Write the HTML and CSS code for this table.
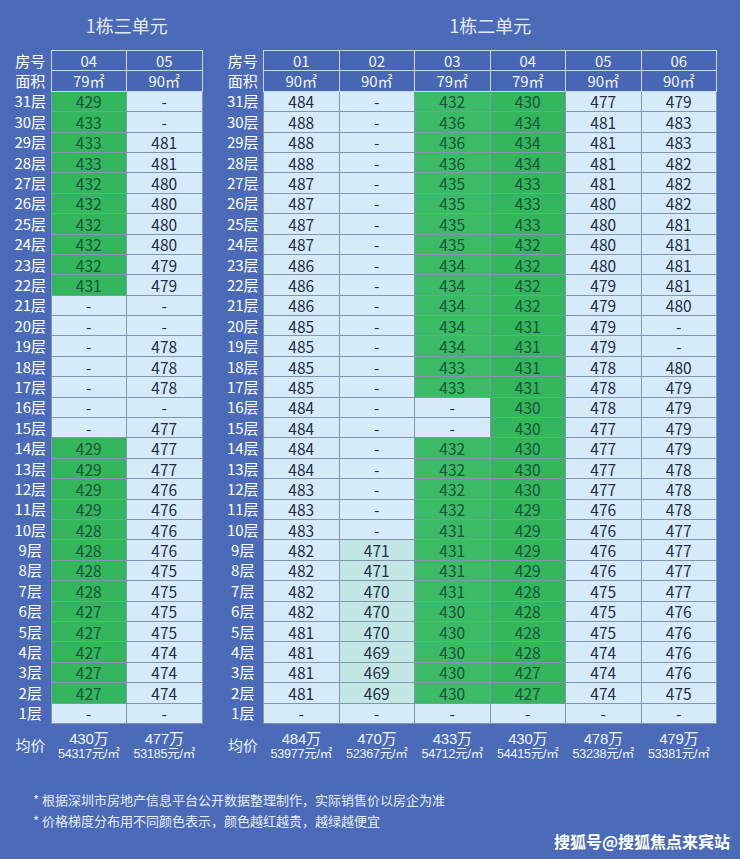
FILE: index.html
```html
<!DOCTYPE html>
<html lang="zh-CN">
<head>
<meta charset="utf-8">
<title>1栋 价格表</title>
<link rel="stylesheet" href="styles.css">
</head>
<body>
<main class="page">
  <div class="blocks">
    <section class="block">
      <h2 class="title">1栋三单元</h2>
      <table class="sheet sheet-2">
        <colgroup><col class="c-label"><col class="c-data"><col class="c-data"></colgroup>
        <thead>
          <tr><th class="lab">房号</th><td>04</td><td>05</td></tr>
          <tr><th class="lab">面积</th><td>79㎡</td><td>90㎡</td></tr>
        </thead>
        <tbody>
          <tr><th class="lab">31层</th><td class="g">429</td><td>-</td></tr>
          <tr><th class="lab">30层</th><td class="g">433</td><td>-</td></tr>
          <tr><th class="lab">29层</th><td class="g">433</td><td>481</td></tr>
          <tr><th class="lab">28层</th><td class="g">433</td><td>481</td></tr>
          <tr><th class="lab">27层</th><td class="g">432</td><td>480</td></tr>
          <tr><th class="lab">26层</th><td class="g">432</td><td>480</td></tr>
          <tr><th class="lab">25层</th><td class="g">432</td><td>480</td></tr>
          <tr><th class="lab">24层</th><td class="g">432</td><td>480</td></tr>
          <tr><th class="lab">23层</th><td class="g">432</td><td>479</td></tr>
          <tr><th class="lab">22层</th><td class="g">431</td><td>479</td></tr>
          <tr><th class="lab">21层</th><td>-</td><td>-</td></tr>
          <tr><th class="lab">20层</th><td>-</td><td>-</td></tr>
          <tr><th class="lab">19层</th><td>-</td><td>478</td></tr>
          <tr><th class="lab">18层</th><td>-</td><td>478</td></tr>
          <tr><th class="lab">17层</th><td>-</td><td>478</td></tr>
          <tr><th class="lab">16层</th><td>-</td><td>-</td></tr>
          <tr><th class="lab">15层</th><td>-</td><td>477</td></tr>
          <tr><th class="lab">14层</th><td class="g">429</td><td>477</td></tr>
          <tr><th class="lab">13层</th><td class="g">429</td><td>477</td></tr>
          <tr><th class="lab">12层</th><td class="g">429</td><td>476</td></tr>
          <tr><th class="lab">11层</th><td class="g">429</td><td>476</td></tr>
          <tr><th class="lab">10层</th><td class="g">428</td><td>476</td></tr>
          <tr><th class="lab">9层</th><td class="g">428</td><td>476</td></tr>
          <tr><th class="lab">8层</th><td class="g">428</td><td>475</td></tr>
          <tr><th class="lab">7层</th><td class="g">428</td><td>475</td></tr>
          <tr><th class="lab">6层</th><td class="g">427</td><td>475</td></tr>
          <tr><th class="lab">5层</th><td class="g">427</td><td>475</td></tr>
          <tr><th class="lab">4层</th><td class="g">427</td><td>474</td></tr>
          <tr><th class="lab">3层</th><td class="g">427</td><td>474</td></tr>
          <tr><th class="lab">2层</th><td class="g">427</td><td>474</td></tr>
          <tr><th class="lab">1层</th><td>-</td><td>-</td></tr>
        </tbody>
        <tfoot>
          <tr>
            <th class="avg-lab">均价</th>
            <td class="avg"><span class="avg-total">430万</span><span class="avg-unit">54317元/㎡</span></td>
            <td class="avg"><span class="avg-total">477万</span><span class="avg-unit">53185元/㎡</span></td>
          </tr>
        </tfoot>
      </table>
    </section>

    <section class="block">
      <h2 class="title">1栋二单元</h2>
      <table class="sheet sheet-6">
        <colgroup><col class="c-label"><col class="c-data"><col class="c-data"><col class="c-data"><col class="c-data"><col class="c-data"><col class="c-data"></colgroup>
        <thead>
          <tr><th class="lab">房号</th><td>01</td><td>02</td><td>03</td><td>04</td><td>05</td><td>06</td></tr>
          <tr><th class="lab">面积</th><td>90㎡</td><td>90㎡</td><td>79㎡</td><td>79㎡</td><td>90㎡</td><td>90㎡</td></tr>
        </thead>
        <tbody>
          <tr><th class="lab">31层</th><td>484</td><td>-</td><td class="g g3">432</td><td class="g">430</td><td>477</td><td>479</td></tr>
          <tr><th class="lab">30层</th><td>488</td><td>-</td><td class="g g3">436</td><td class="g">434</td><td>481</td><td>483</td></tr>
          <tr><th class="lab">29层</th><td>488</td><td>-</td><td class="g g3">436</td><td class="g">434</td><td>481</td><td>483</td></tr>
          <tr><th class="lab">28层</th><td>488</td><td>-</td><td class="g g3">436</td><td class="g">434</td><td>481</td><td>482</td></tr>
          <tr><th class="lab">27层</th><td>487</td><td>-</td><td class="g g3">435</td><td class="g">433</td><td>481</td><td>482</td></tr>
          <tr><th class="lab">26层</th><td>487</td><td>-</td><td class="g g3">435</td><td class="g">433</td><td>480</td><td>482</td></tr>
          <tr><th class="lab">25层</th><td>487</td><td>-</td><td class="g g3">435</td><td class="g">433</td><td>480</td><td>481</td></tr>
          <tr><th class="lab">24层</th><td>487</td><td>-</td><td class="g g3">435</td><td class="g">432</td><td>480</td><td>481</td></tr>
          <tr><th class="lab">23层</th><td>486</td><td>-</td><td class="g g3">434</td><td class="g">432</td><td>480</td><td>481</td></tr>
          <tr><th class="lab">22层</th><td>486</td><td>-</td><td class="g g3">434</td><td class="g">432</td><td>479</td><td>481</td></tr>
          <tr><th class="lab">21层</th><td>486</td><td>-</td><td class="g g3">434</td><td class="g">432</td><td>479</td><td>480</td></tr>
          <tr><th class="lab">20层</th><td>485</td><td>-</td><td class="g g3">434</td><td class="g">431</td><td>479</td><td>-</td></tr>
          <tr><th class="lab">19层</th><td>485</td><td>-</td><td class="g g3">434</td><td class="g">431</td><td>479</td><td>-</td></tr>
          <tr><th class="lab">18层</th><td>485</td><td>-</td><td class="g g3">433</td><td class="g">431</td><td>478</td><td>480</td></tr>
          <tr><th class="lab">17层</th><td>485</td><td>-</td><td class="g g3">433</td><td class="g">431</td><td>478</td><td>479</td></tr>
          <tr><th class="lab">16层</th><td>484</td><td>-</td><td>-</td><td class="g">430</td><td>478</td><td>479</td></tr>
          <tr><th class="lab">15层</th><td>484</td><td>-</td><td>-</td><td class="g">430</td><td>477</td><td>479</td></tr>
          <tr><th class="lab">14层</th><td>484</td><td>-</td><td class="g g3">432</td><td class="g">430</td><td>477</td><td>479</td></tr>
          <tr><th class="lab">13层</th><td>484</td><td>-</td><td class="g g3">432</td><td class="g">430</td><td>477</td><td>478</td></tr>
          <tr><th class="lab">12层</th><td>483</td><td>-</td><td class="g g3">432</td><td class="g">430</td><td>477</td><td>478</td></tr>
          <tr><th class="lab">11层</th><td>483</td><td>-</td><td class="g g3">432</td><td class="g">429</td><td>476</td><td>478</td></tr>
          <tr><th class="lab">10层</th><td>483</td><td>-</td><td class="g g3">431</td><td class="g">429</td><td>476</td><td>477</td></tr>
          <tr><th class="lab">9层</th><td>482</td><td class="t">471</td><td class="g g3">431</td><td class="g">429</td><td>476</td><td>477</td></tr>
          <tr><th class="lab">8层</th><td>482</td><td class="t">471</td><td class="g g3">431</td><td class="g">429</td><td>476</td><td>477</td></tr>
          <tr><th class="lab">7层</th><td>482</td><td class="t">470</td><td class="g g3">431</td><td class="g">428</td><td>475</td><td>477</td></tr>
          <tr><th class="lab">6层</th><td>482</td><td class="t">470</td><td class="g g3">430</td><td class="g">428</td><td>475</td><td>476</td></tr>
          <tr><th class="lab">5层</th><td>481</td><td class="t">470</td><td class="g g3">430</td><td class="g">428</td><td>475</td><td>476</td></tr>
          <tr><th class="lab">4层</th><td>481</td><td class="t">469</td><td class="g g3">430</td><td class="g">428</td><td>474</td><td>476</td></tr>
          <tr><th class="lab">3层</th><td>481</td><td class="t">469</td><td class="g g3">430</td><td class="g">427</td><td>474</td><td>476</td></tr>
          <tr><th class="lab">2层</th><td>481</td><td class="t">469</td><td class="g g3">430</td><td class="g">427</td><td>474</td><td>475</td></tr>
          <tr><th class="lab">1层</th><td>-</td><td>-</td><td>-</td><td>-</td><td>-</td><td>-</td></tr>
        </tbody>
        <tfoot>
          <tr>
            <th class="avg-lab">均价</th>
            <td class="avg"><span class="avg-total">484万</span><span class="avg-unit">53977元/㎡</span></td>
            <td class="avg"><span class="avg-total">470万</span><span class="avg-unit">52367元/㎡</span></td>
            <td class="avg"><span class="avg-total">433万</span><span class="avg-unit">54712元/㎡</span></td>
            <td class="avg"><span class="avg-total">430万</span><span class="avg-unit">54415元/㎡</span></td>
            <td class="avg"><span class="avg-total">478万</span><span class="avg-unit">53238元/㎡</span></td>
            <td class="avg"><span class="avg-total">479万</span><span class="avg-unit">53381元/㎡</span></td>
          </tr>
        </tfoot>
      </table>
    </section>
  </div>

  <footer class="notes">
    <p class="note">* 根据深圳市房地产信息平台公开数据整理制作，实际销售价以房企为准</p>
    <p class="note">* 价格梯度分布用不同颜色表示，颜色越红越贵，越绿越便宜</p>
    <p class="mark">搜狐号@搜狐焦点来宾站</p>
  </footer>
</main>
</body>
</html>
```

FILE: styles.css
```css
html, body {
  margin: 0;
  padding: 0;
}

body {
  background: #4b6bb8;
  font-family: "Noto Sans CJK SC", "Noto Sans", sans-serif;
  color: #ffffff;
}

.page {
  width: 740px;
  height: 859px;
  box-sizing: border-box;
  padding-left: 10px;
  overflow: hidden;
}

.blocks {
  display: flex;
  align-items: flex-start;
  gap: 20px;
}

.title {
  margin: 0 0 0 41px;
  height: 50px;
  line-height: 50px;
  font-size: 18px;
  font-weight: 400;
  color: #e2e9f6;
  text-align: center;
}

.sheet {
  border-collapse: collapse;
  table-layout: fixed;
}

.sheet-2 {
  width: 192px;
}

.sheet-6 {
  width: 494px;
}

.c-label {
  width: 41px;
}

.c-data {
  width: 75.5px;
}

.sheet tr {
  height: 20.4px;
}

.sheet th,
.sheet td {
  padding: 0;
  text-align: center;
  white-space: nowrap;
}

.lab {
  font-weight: 400;
  font-size: 15px;
  line-height: 18px;
  color: #ffffff;
}

.sheet thead td {
  border: 1px solid #cbd8ee;
  background: #4767b5;
  color: #eef3fb;
  font-size: 15px;
  line-height: 18px;
}

.sheet tbody td {
  border: 1px solid #8194b0;
  background: #d5ebfa;
  color: #1f2c47;
  font-size: 15.5px;
  line-height: 18px;
}

.sheet tbody td.g {
  background: #33b65c;
  color: #16553a;
}

.sheet tbody td.g3 {
  background: #3bbb66;
}

.sheet tbody td.t {
  background: #c2e6e3;
}

.sheet tfoot tr {
  height: 40px;
}

.sheet th.avg-lab {
  font-weight: 400;
  font-size: 15px;
  line-height: 18px;
  color: #eef3fb;
  vertical-align: top;
  padding-top: 13px;
}

.sheet td.avg {
  vertical-align: top;
  padding-top: 6px;
  color: #eef3fb;
  font-family: "Liberation Sans", "Noto Sans CJK SC", sans-serif;
}

.avg-total {
  display: block;
  font-size: 15px;
  line-height: 17px;
  letter-spacing: -0.3px;
}

.avg-unit {
  display: block;
  font-size: 12.5px;
  line-height: 14px;
  letter-spacing: -0.2px;
}

.notes {
  margin-top: 26px;
}

.note {
  margin: 0 0 0 23px;
  font-size: 13px;
  line-height: 21px;
  color: #e6ecf7;
}

.mark {
  margin: 0;
  padding-right: 10px;
  text-align: right;
  font-size: 16px;
  line-height: 20px;
  font-weight: 700;
  color: #ffffff;
}
```
